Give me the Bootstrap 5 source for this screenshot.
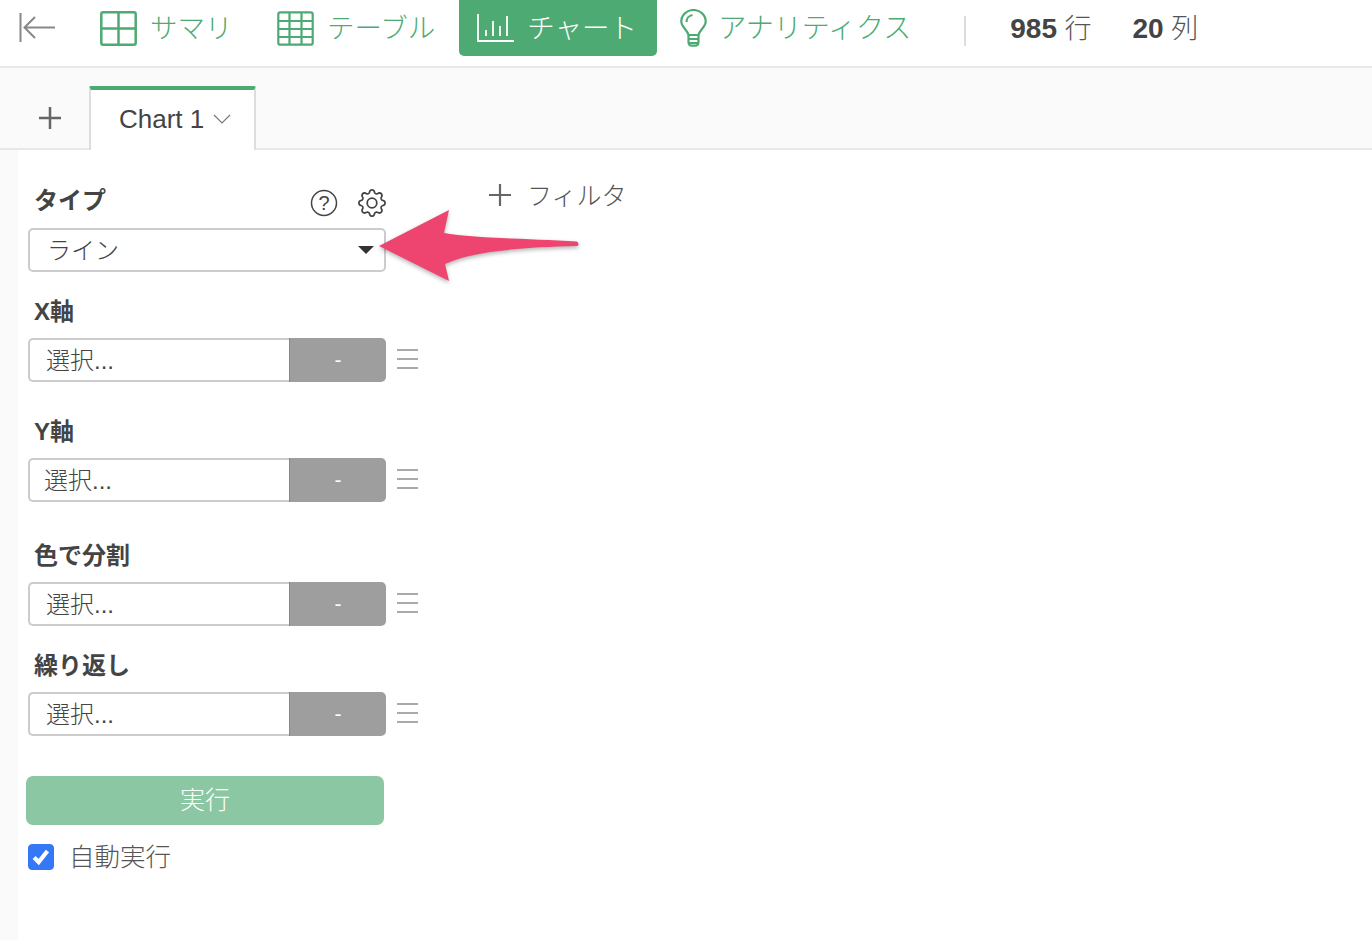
<!DOCTYPE html>
<html lang="ja">
<head>
<meta charset="utf-8">
<title>Chart</title>
<link rel="stylesheet" href="https://cdn.jsdelivr.net/npm/bootstrap@5.3.0/dist/css/bootstrap.min.css">
<style>
html,body{height:100%;overflow:hidden}
body{background:#fff;color:#444;font-family:"Liberation Sans","Noto Sans CJK JP",sans-serif;font-weight:300}
.topbar{height:68px;border-bottom:2px solid #e8e8e8;background:#fff;padding-left:19px}
.tabitem{height:56px;color:#4daa73;font-size:27.5px;line-height:56px;gap:13px;text-decoration:none;white-space:nowrap}
.tabitem span{padding-top:2px}
.tabitem.on{background:#4daa73;color:#fff;border-radius:0 0 5px 5px;width:198px;padding-left:18px;margin-left:24px}
.m-sum{margin-left:44px}.m-tbl{margin-left:44.5px}.m-ana{margin-left:23px;gap:11px;font-size:28px}
.vsep{width:2px;height:30px;background:#ddd;margin:0 44px 0 53px}
.stat{font-size:27px;color:#555;line-height:58px;white-space:nowrap}
.stat b{font-weight:700;font-size:28px;color:#444}
.stat+.stat{margin-left:41px}
.tabstrip{height:82px;background:#fafafa;border-bottom:2px solid #e8e8e8}
.addtab{width:89px;padding-left:38px;height:80px;padding-top:37px}
.charttab{width:167px;height:64px;margin-top:18px;background:#fff;border:2px solid #ddd;border-top:4px solid #4daa73;border-bottom:0;border-radius:2px 2px 0 0;font-size:26px;line-height:58px;padding-left:28px;gap:9px;position:relative}
.charttab::after{content:"";position:absolute;left:0;right:0;bottom:-2px;height:2px;background:#fff}
.mainarea{height:790px;background:#fafafa}
.panel{background:#fff;margin-left:18px;height:100%;position:relative}
.sidebar{width:471px;padding:35px 0 0 10px;flex:none}
.fieldname{font-size:24px;font-weight:700;line-height:30px;color:#444;padding:1px 0 0 6px;margin-bottom:11px}
.fieldhead{height:30px;margin-bottom:13px;width:358px}
.gap-y{margin-top:34px}.gap-c{margin-top:38px}
.iconpair{gap:20px;padding-top:5px}
.pick{width:358px;height:44px;flex:none}
.form-select.pick{border:2px solid #ccc;border-radius:5px;font-size:24px;font-weight:300;color:#444;padding:2px 0 0 17px;line-height:38px;background-position:right 9px center;background-size:18px 10px;background-image:url("data:image/svg+xml,%3Csvg xmlns='http://www.w3.org/2000/svg' viewBox='0 0 18 10'%3E%3Cpath fill='%23333' d='M1 1h16l-8 8z'/%3E%3C/svg%3E")}
.pick .form-control{border:2px solid #ccc;border-right:0;border-radius:5px 0 0 5px;font-size:24px;font-weight:300;color:#444;padding:2px 0 0 16px;line-height:38px;background:#fff}
.pick .form-control.nudge{padding-left:14px}
.input-group.pick .input-group-text{width:98px;flex:none;margin-left:0;border:0;border-left:2px solid #888;background:#9e9e9e;color:#fff;border-radius:0 5px 5px 0;justify-content:center;font-size:21px;padding:0}
.dragger{width:21px;margin:-2px 0 0 11px;height:20px;border-top:2px solid #aaa;border-bottom:2px solid #aaa;position:relative}
.dragger::after{content:"";position:absolute;left:0;right:0;top:7px;height:2px;background:#aaa}
.btn.runbtn:disabled{width:358px;height:49px;margin:40px 0 0 -2px;background:#8bc7a3;border:0;border-radius:7px;color:#fff;font-size:25px;font-weight:300;padding:0;opacity:1}
.autorun{margin:18px 0 0 0;gap:15px;font-size:25.500px;line-height:26px;min-height:0;padding:0}
.autorun .form-check-input:checked[type=checkbox]{width:26px;height:26px;margin:0;float:none;border-radius:4px;background-color:#3478f6;border-color:#3478f6;background-size:100% 100%;background-image:url("data:image/svg+xml,%3Csvg xmlns='http://www.w3.org/2000/svg' viewBox='0 0 26 26'%3E%3Cpath fill='none' stroke='%23fff' stroke-width='4.500' d='M5.500 13.500l5 5 9.500-12'/%3E%3C/svg%3E")}
.autorun .form-check-label{opacity:1;color:#555;padding-top:1px}
.filterbox{padding-top:30px;font-size:25px;color:#555;gap:16px;line-height:32px}
.arrowmark{position:absolute;left:340px;top:50px;filter:drop-shadow(0 2px 2px rgba(0,0,0,.3))}
</style>
</head>
<body>
<nav class="topbar d-flex align-items-start">
  <svg width="37" height="56" viewBox="0 0 37 56" fill="none" stroke="#888" stroke-width="2"><path d="M1.500 13v29M36 27.500H6M16 17 5.500 27.500 16 38"/></svg>
  <a href="#" class="tabitem d-flex align-items-center m-sum">
    <svg width="37" height="35" viewBox="0 0 37 35" fill="none" stroke="#4daa73" stroke-width="2.500"><rect x="1.300" y="1.300" width="34.400" height="32.400" rx="2"/><path d="M18.500 1v33M1 17.500h35"/></svg><span>サマリ</span></a>
  <a href="#" class="tabitem d-flex align-items-center m-tbl">
    <svg width="37" height="35" viewBox="0 0 37 35" fill="none" stroke="#4daa73" stroke-width="2.200"><rect x="1.300" y="1.300" width="34.400" height="32.400" rx="2"/><path d="M1 10h35M1 18h35M1 26h35M12.500 1v33M24.500 1v33"/></svg><span>テーブル</span></a>
  <a href="#" class="tabitem on d-flex align-items-center">
    <svg width="37" height="30" viewBox="0 0 37 30" fill="none" stroke="#fff" stroke-width="1.800"><path d="M1 1v27h36M9 17v6M16 8v15M23 13v10M30 3v20"/></svg><span>チャート</span></a>
  <a href="#" class="tabitem d-flex align-items-center m-ana">
    <svg width="27" height="38" viewBox="0 0 27 38" fill="none" stroke="#4daa73" stroke-width="2.200"><path d="M8.500 26C7.500 21 1.300 18 1.300 12.500a12.200 11.500 0 0 1 24.400 0C25.700 18 19.500 21 18.500 26zM8.500 26v7c0 2.500 1.500 3.700 3.500 3.700h3c2 0 3.500-1.200 3.500-3.700v-7M8.500 30h10M8.500 34h10"/><path d="M6.500 13a7 7 0 0 1 6-7"/></svg><span>アナリティクス</span></a>
  <div class="vsep mt-3"></div>
  <div class="stat"><b>985</b> 行</div>
  <div class="stat"><b>20</b> 列</div>
</nav>
<div class="tabstrip d-flex">
  <div class="addtab"><svg width="24" height="24" viewBox="0 0 24 24" stroke="#666" stroke-width="2.500"><path d="M12 1v22M1 12h22"/></svg></div>
  <div class="charttab d-flex align-items-start">Chart 1
    <svg class="mt-4" width="18" height="10" viewBox="0 0 18 10" fill="none" stroke="#777" stroke-width="1.200"><path d="M1 1l8 8 8-8"/></svg>
  </div>
</div>
<div class="mainarea">
  <div class="panel d-flex">
    <section class="sidebar">
      <div class="fieldhead d-flex align-items-center justify-content-between">
        <span class="fieldname mb-0">タイプ</span>
        <span class="iconpair d-flex align-items-center">
          <svg width="28" height="28" viewBox="0 0 28 28"><circle cx="14" cy="14" r="12.500" fill="none" stroke="#444" stroke-width="1.500"/><text x="14" y="21" text-anchor="middle" font-size="20" fill="#444" font-family="Liberation Sans">?</text></svg>
          <svg width="28" height="28" viewBox="0 0 16 16" fill="#444"><path d="M8 4.754a3.246 3.246 0 1 0 0 6.492 3.246 3.246 0 0 0 0-6.492zM5.754 8a2.246 2.246 0 1 1 4.492 0 2.246 2.246 0 0 1-4.492 0z"/><path d="M9.796 1.343c-.527-1.790-3.065-1.790-3.592 0l-.094.319a.873.873 0 0 1-1.255.52l-.292-.16c-1.640-.892-3.433.902-2.540 2.541l.159.292a.873.873 0 0 1-.52 1.255l-.319.094c-1.790.527-1.790 3.065 0 3.592l.319.094a.873.873 0 0 1 .52 1.255l-.16.292c-.892 1.640.901 3.434 2.541 2.540l.292-.159a.873.873 0 0 1 1.255.52l.094.319c.527 1.790 3.065 1.790 3.592 0l.094-.319a.873.873 0 0 1 1.255-.52l.292.16c1.640.893 3.434-.902 2.540-2.541l-.159-.292a.873.873 0 0 1 .52-1.255l.319-.094c1.790-.527 1.790-3.065 0-3.592l-.319-.094a.873.873 0 0 1-.52-1.255l.16-.292c.893-1.640-.902-3.433-2.541-2.540l-.292.159a.873.873 0 0 1-1.255-.52l-.094-.319zm-2.633.283c.246-.835 1.428-.835 1.674 0l.094.319a1.873 1.873 0 0 0 2.693 1.115l.291-.16c.764-.415 1.600.42 1.184 1.185l-.159.292a1.873 1.873 0 0 0 1.116 2.692l.318.094c.835.246.835 1.428 0 1.674l-.319.094a1.873 1.873 0 0 0-1.115 2.693l.16.291c.415.764-.42 1.600-1.185 1.184l-.291-.159a1.873 1.873 0 0 0-2.693 1.116l-.094.318c-.246.835-1.428.835-1.674 0l-.094-.319a1.873 1.873 0 0 0-2.692-1.115l-.292.16c-.764.415-1.600-.42-1.184-1.185l.159-.291A1.873 1.873 0 0 0 1.945 8.930l-.319-.094c-.835-.246-.835-1.428 0-1.674l.319-.094A1.873 1.873 0 0 0 3.060 4.377l-.16-.292c-.415-.764.42-1.600 1.185-1.184l.292.159a1.873 1.873 0 0 0 2.692-1.115l.094-.319z"/></svg>
        </span>
      </div>
      <select class="form-select pick" aria-label="タイプ"><option>ライン</option></select>

      <div class="fieldname mt-4">X軸</div>
      <div class="d-flex align-items-center">
        <div class="input-group pick"><div class="form-control">選択...</div><span class="input-group-text">-</span></div>
        <div class="dragger"></div>
      </div>

      <div class="fieldname gap-y">Y軸</div>
      <div class="d-flex align-items-center">
        <div class="input-group pick"><div class="form-control nudge">選択...</div><span class="input-group-text">-</span></div>
        <div class="dragger"></div>
      </div>

      <div class="fieldname gap-c">色で分割</div>
      <div class="d-flex align-items-center">
        <div class="input-group pick"><div class="form-control">選択...</div><span class="input-group-text">-</span></div>
        <div class="dragger"></div>
      </div>

      <div class="fieldname mt-4">繰り返し</div>
      <div class="d-flex align-items-center">
        <div class="input-group pick"><div class="form-control">選択...</div><span class="input-group-text">-</span></div>
        <div class="dragger"></div>
      </div>

      <button class="btn runbtn d-block" disabled>実行</button>
      <div class="form-check autorun d-flex align-items-center">
        <input class="form-check-input" type="checkbox" id="auto" checked>
        <label class="form-check-label" for="auto">自動実行</label>
      </div>
    </section>
    <div class="filterbox d-flex align-items-start">
      <svg class="mt-1" width="22" height="22" viewBox="0 0 22 22" stroke="#666" stroke-width="2.200"><path d="M11 0v22M0 11h22"/></svg>
      <span>フィルタ</span>
    </div>
    <svg class="arrowmark" width="222" height="90" viewBox="0 0 222 90"><path fill="#ee4570" d="M21 46 91 10 86 33C112 38 172 39 219 41.500 221 43 221 45 219 46 172 47 117 50 87 64L91 81Z"/></svg>
  </div>
</div>
</body>
</html>
